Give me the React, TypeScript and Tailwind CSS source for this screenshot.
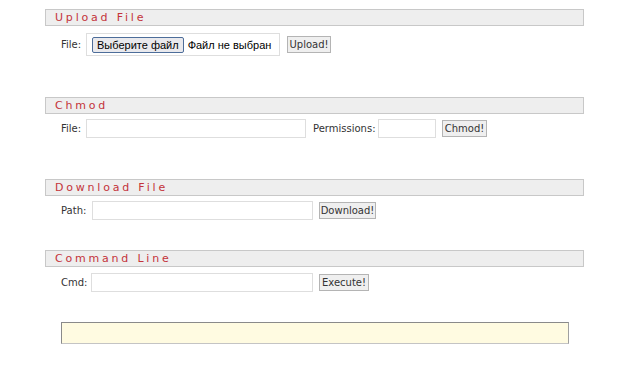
const font = "font-['DejaVu_Sans',Verdana,sans-serif]";

function SectionHeader({ title }: { title: string }) {
  return (
    <div className="h-[17px] border border-[#c8c8c8] bg-[#eeeeee] pl-[9px] text-[11px] leading-[15px] tracking-[2.8px] text-[#c4333a]">
      {title}
    </div>
  );
}

function Btn({ label, w }: { label: string; w: string }) {
  return (
    <button
      type="button"
      className={`h-[17px] ${w} border border-[#b4b4b4] bg-[#efefef] text-[10px] leading-[15px] text-[#333]`}
    >
      {label}
    </button>
  );
}

function TextBox({ w }: { w: string }) {
  return <div className={`h-[19px] ${w} border border-[#dedede] bg-white`} />;
}

export default function App() {
  return (
    <div className={`min-h-screen bg-white text-[10px] leading-[12px] text-[#333] ${font}`}>
      <div className="ml-[45px] w-[539px] pt-[9px]">
        <SectionHeader title="Upload File" />
        <div className="mt-[7px] flex h-[23px] items-center pl-[16px]">
          <span className="w-[25px]">File:</span>
          <div className="flex h-[23px] w-[194px] items-center border border-[#dedede] bg-white pl-[5px]">
            <button
              type="button"
              className="h-[16px] rounded-[2px] border border-[#4d6d9a] bg-[#e9e9ed] px-[4px] font-['Liberation_Sans',Arial,sans-serif] text-[11px] leading-[14px] text-black"
            >
              Выберите файл
            </button>
            <span className="ml-[4px] font-['Liberation_Sans',Arial,sans-serif] text-[11px] text-black">
              Файл не выбран
            </span>
          </div>
          <div className="ml-[7px] flex">
            <Btn label="Upload!" w="w-[44px]" />
          </div>
        </div>

        <div className="mt-[41px]">
          <SectionHeader title="Chmod" />
        </div>
        <div className="mt-[5px] flex h-[19px] items-center pl-[16px]">
          <span className="w-[25px]">File:</span>
          <TextBox w="w-[220px]" />
          <span className="ml-[7px] w-[65px]">Permissions:</span>
          <TextBox w="w-[58px]" />
          <div className="ml-[6px] flex">
            <Btn label="Chmod!" w="w-[45px]" />
          </div>
        </div>

        <div className="mt-[41px]">
          <SectionHeader title="Download File" />
        </div>
        <div className="mt-[5px] flex h-[19px] items-center pl-[16px]">
          <span className="w-[31px]">Path:</span>
          <TextBox w="w-[221px]" />
          <div className="ml-[6px] flex">
            <Btn label="Download!" w="w-[57px]" />
          </div>
        </div>

        <div className="mt-[30px]">
          <SectionHeader title="Command Line" />
        </div>
        <div className="mt-[6px] flex h-[19px] items-center pl-[16px]">
          <span className="w-[30px]">Cmd:</span>
          <TextBox w="w-[222px]" />
          <div className="ml-[6px] flex">
            <Btn label="Execute!" w="w-[50px]" />
          </div>
        </div>

        <div className="ml-[16px] mt-[30px] h-[22px] w-[508px] border border-t-[#8a8a8a] border-l-[#8a8a8a] border-r-[#a0a0a0] border-b-[#c4c4c4] bg-[#fffbe1]" />
      </div>
    </div>
  );
}
